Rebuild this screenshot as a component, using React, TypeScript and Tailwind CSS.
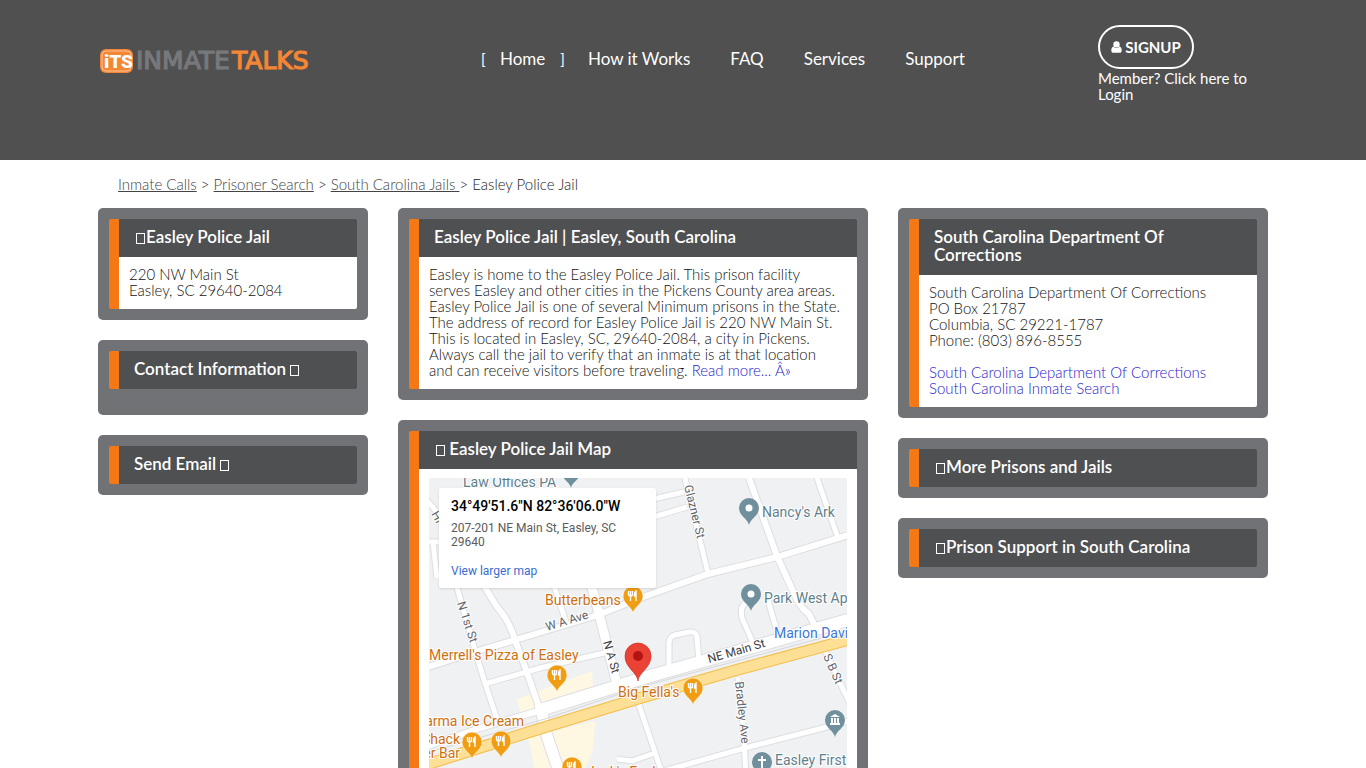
import React from 'react';

interface PanelProps {
  title: React.ReactNode;
  children?: React.ReactNode;
  className?: string;
}

// Empty glyph box shown beside some of the panel titles
const Glyph = ({ className = '' }: { className?: string }) => (
  <span
    aria-hidden="true"
    className={`inline-block h-[11px] w-[9px] border border-white align-[-1px] ${className}`}
  />
);

const Panel = ({ title, children, className = '' }: PanelProps) => (
  <section className={`rounded-[5px] bg-[#717275] p-[11px] ${className}`}>
    <div className="overflow-hidden rounded-[2px] border-l-10 border-[#f47816]">
      <h2 className="bg-[#4f5052] px-[15px] pt-[9px] pb-[11px] text-[17px] leading-[18px] font-semibold text-white">
        {title}
      </h2>
      {children && <div className="bg-white px-[10px] pt-[9px] pb-[11px]">{children}</div>}
    </div>
  </section>
);

const Logo = () => (
  <svg width="213" height="28" viewBox="0 0 213 28" role="img" aria-label="InmateTalks">
    <rect x="2" y="2" width="33" height="24" rx="6" fill="#f58634" />
    <rect x="4" y="4" width="29" height="20" rx="4" fill="none" stroke="#fff" opacity="0.5" />
    <text x="6" y="21" fontFamily="Roboto, sans-serif" fontWeight="900" fontSize="19" fill="#fff">
      iTS
    </text>
    <g fontFamily="'DejaVu Sans', sans-serif" fontWeight="400" fontSize="25" strokeWidth="1.2">
      <text x="38" y="22" fill="#77787b" stroke="#77787b">
        INMATE
      </text>
      <text x="134" y="22" fill="#f58634" stroke="#f58634">
        TALKS
      </text>
    </g>
  </svg>
);

const UserIcon = () => (
  <svg width="11" height="12" viewBox="0 0 11 12" fill="currentColor" aria-hidden="true">
    <circle cx="5.5" cy="3.4" r="3.2" />
    <path d="M2.6 5.4C1 5.6 0.3 7.2 0.3 9.4C0.3 11 1.2 11.8 2.4 11.8H8.600C9.800 11.8 10.7 11 10.7 9.4C10.7 7.2 10 5.6 8.4 5.4C7.600 6.4 6.600 7 5.500 7S3.400 6.400 2.600 5.400Z" />
  </svg>
);

const navLinks = ['How it Works', 'FAQ', 'Services', 'Support'];

const Header = () => (
  <header className="h-40 bg-[#505050] font-normal text-white">
    <div className="mx-auto grid max-w-[1170px] grid-cols-12 gap-[30px]">
      <a href="#" className="col-span-3 pt-[47px]">
        <Logo />
      </a>
      <nav className="col-span-7 flex gap-10 pt-[49px] pl-[83px] text-[17px] leading-5 whitespace-nowrap">
        <a href="#" className="-mr-[17px] flex">
          <span className="w-[19px] text-[15px]">[</span>
          Home
          <span className="pl-[15px] text-[15px]">]</span>
        </a>
        {navLinks.map((link) => (
          <a key={link} href="#">
            {link}
          </a>
        ))}
      </nav>
      <div className="col-span-2 pt-[25px] text-[15px] leading-4">
        <button className="flex h-11 w-24 items-center justify-center gap-[3px] rounded-full border-2 border-white font-bold">
          <UserIcon />
          SIGNUP
        </button>
        <a href="#" className="block pt-px">
          Member? Click here to Login
        </a>
      </div>
    </div>
  </header>
);

const roads = [
  { w: 5, d: 'M685 478L690 500L708 573' },
  { w: 6, d: 'M749 478L777 556L797 600Q803 610 809 614L815 626' },
  { w: 5, d: 'M817 478L838 538' },
  { w: 6, d: 'M855 533L777 557L708 574L643 597L598 615L515 640L475 652L425 668' },
  { w: 5, d: 'M640 502L684 492' },
  { w: 5, d: 'M640 521L687 507' },
  { w: 5, d: 'M425 542H450M433 542L437 578' },
  { w: 5, d: 'M425 498L450 528' },
  { w: 5, d: 'M452 570L475 650L485 683L498 722' },
  { w: 6, d: 'M478 576L497 607Q509 620 515 640L525 667L540 710' },
  { w: 5, d: 'M552 580L567 625' },
  { w: 9, d: 'M590 580L598 610L617 684' },
  { w: 5, d: 'M485 684L540 668L608 652' },
  { w: 5, d: 'M669 668V643Q669 637 675 635L689 632Q697 631 697 638L699 662' },
  { w: 5, d: 'M757 652L742 618Q739 606 748 601' },
  { w: 5, d: 'M768 600L776 628' },
  { w: 12, d: 'M540 710L650 676L707 660L855 618' },
  { w: 6, d: 'M425 747L480 728L545 709' },
  { w: 5, d: 'M638 702L663 776' },
  { w: 5, d: 'M738 678L742 710L746 775' },
  { w: 5, d: 'M660 772L745 748L827 727L855 719' },
  { w: 5, d: 'M823 646L850 704' },
  { w: 5, d: 'M617 759L632 761L655 753' },
  { w: 11, d: 'M540 704L546 733L560 775' },
];

const highway = 'M425 765L542 728L640 698L740 669L855 638';

const pinPath = 'M0 17C-1 11 -10 8 -10 0A10 10 0 0 1 10 0C10 8 1 11 0 17Z';

const foodPins = [
  [633, 596],
  [557, 675],
  [693, 688],
  [472, 742],
  [501, 741],
  [572, 767],
];

const placePins = [
  [749, 508],
  [751, 594],
  [571, 471],
];

const MapView = () => (
  <svg
    className="block h-[300px] w-full font-normal"
    viewBox="429 478 418 300"
    preserveAspectRatio="xMinYMin slice"
    role="img"
    aria-label="Easley Police Jail Map"
  >
    <rect x="429" y="478" width="418" height="300" fill="#f0f1f3" />
    <path d="M517 699L592 671L594 699L522 720ZM528 737L595 721L593 745Q592 757 585 768L535 770Z" fill="#fef8e3" />
    <g fill="none" stroke="#dcdee2">
      {roads.map((road) => (
        <path key={road.d} d={road.d} strokeWidth={road.w + 2} />
      ))}
    </g>
    <g fill="none" stroke="#fff">
      {roads.map((road) => (
        <path key={road.d} d={road.d} strokeWidth={road.w} />
      ))}
    </g>
    <path d="M425 753L545 719L640 687L855 629" fill="none" stroke="#d5d7db" />
    <path d={highway} fill="none" stroke="#f3bd48" strokeWidth="12" />
    <path d={highway} fill="none" stroke="#fde096" strokeWidth="10" />

    {/* Street names */}
    <g
      fontFamily="Roboto, sans-serif"
      fontSize="12"
      fill="#5f6368"
      stroke="#fff"
      strokeWidth="2"
      paintOrder="stroke"
    >
      <text transform="translate(684 486) rotate(76)">Glazner St</text>
      <text transform="translate(457 603) rotate(72)">N 1st St</text>
      <text transform="translate(547 631) rotate(-17)">W A Ave</text>
      <text transform="translate(603 642) rotate(74)" fill="#3c4043">N A St</text>
      <text transform="translate(709 663) rotate(-16)" fill="#3c4043">NE Main St</text>
      <text transform="translate(735 682) rotate(84)">Bradley Ave</text>
      <text transform="translate(823 656) rotate(66)">S B St</text>
      <text transform="translate(431 514) rotate(60)">Hi</text>
    </g>

    {foodPins.map(([x, y]) => (
      <g key={`${x}-${y}`} transform={`translate(${x} ${y})`}>
        <path d={pinPath} fill="#f09d14" stroke="#fff" strokeWidth="0.5" />
        <path
          d="M-4.5 -5V-2Q-4.5 0 -2.5 0Q-0.5 0 -0.5 -2V-5M-2.5 -5V5M3 5V-5Q1.5 -4 1.5 0H3"
          fill="none"
          stroke="#fff"
          strokeWidth="1.4"
        />
      </g>
    ))}
    {placePins.map(([x, y]) => (
      <g key={`${x}-${y}`} transform={`translate(${x} ${y})`}>
        <path d={pinPath} fill="#71909d" />
        <circle r="3.5" fill="#fff" />
      </g>
    ))}
    <g transform="translate(835 720)">
      <path d={pinPath} fill="#71909d" />
      <path d="M-5 -3L0 -6L5 -3ZM-4 -2H-2V3H-4ZM-1 -2H1V3H-1ZM2 -2H4V3H2ZM-5 3H5V5H-5Z" fill="#fff" />
    </g>
    <g transform="translate(762 762)">
      <path d={pinPath} fill="#71909d" />
      <path d="M0 -6V6M-4 -2H4" stroke="#fff" strokeWidth="2" />
    </g>
    <g transform="translate(638 656)">
      <path d="M0 25C-1 16 -13 12 -13 0A13 13 0 0 1 13 0C13 12 1 16 0 25Z" fill="#ea4335" stroke="#c5221f" strokeWidth="0.6" />
      <circle r="5" fill="#b31412" />
    </g>

    {/* Place names */}
    <g
      fontFamily="Roboto, sans-serif"
      fontSize="14"
      stroke="#fff"
      strokeWidth="2"
      paintOrder="stroke"
    >
      <g fill="#5f7f8c">
        <text x="463" y="487">Law Offices PA</text>
        <text x="762" y="517">Nancy's Ark</text>
        <text x="764" y="603">Park West Ap</text>
        <text x="775" y="765">Easley First</text>
      </g>
      <text x="774" y="638" fill="#3c78d8">Marion Davi</text>
      <g fill="#cd6f10">
        <text x="545" y="605">Butterbeans</text>
        <text x="429" y="660">Merrell's Pizza of Easley</text>
        <text x="618" y="697">Big Fella's</text>
        <text x="524" y="726" textAnchor="end">arma Ice Cream</text>
        <text x="460" y="744" textAnchor="end">Shack</text>
        <text x="460" y="758" textAnchor="end">er Bar</text>
        <text x="587" y="777">Jack's Easley</text>
      </g>
    </g>
  </svg>
);

const linkStyle = 'text-[#2a22cc]';

export default function App() {
  return (
    <div className="h-screen overflow-hidden bg-white font-[Lato,sans-serif] text-[15px] leading-4 font-light text-[#111]">
      <Header />
      <main className="mx-auto max-w-[1170px]">
        <nav aria-label="Breadcrumb" className="px-5 py-4 text-[#222]">
          <a href="#" className="text-[#444] underline">Inmate Calls</a> &gt;{' '}
          <a href="#" className="text-[#444] underline">Prisoner Search</a> &gt;{' '}
          <a href="#" className="text-[#444] underline">South Carolina Jails </a>
          &gt; Easley Police Jail
        </nav>

        <div className="grid grid-cols-12 items-start gap-[30px]">
          <div className="col-span-3 flex flex-col gap-5">
            <Panel title={<><Glyph className="ml-[2px] mr-[1px]" />Easley Police Jail</>}>
              220 NW Main St
              <br />
              Easley, SC 29640-2084
            </Panel>
            <Panel className="pb-[26px]" title={<>Contact Information <Glyph /></>} />
            <Panel title={<>Send Email <Glyph /></>} />
          </div>

          <div className="col-span-5 flex flex-col gap-5">
            <Panel title="Easley Police Jail | Easley, South Carolina">
              <p>
                Easley is home to the Easley Police Jail. This prison facility
                <br />
                serves Easley and other cities in the Pickens County area areas.
                <br />
                Easley Police Jail is one of several Minimum prisons in the State.
                <br />
                The address of record for Easley Police Jail is 220 NW Main St.
                <br />
                This is located in Easley, SC, 29640-2084, a city in Pickens.
                <br />
                Always call the jail to verify that an inmate is at that location
                <br />
                and can receive visitors before traveling.{' '}
                <a href="#" className={linkStyle}>Read more... Â»</a>
              </p>
            </Panel>
            <Panel title={<><Glyph className="ml-[2px]" /> Easley Police Jail Map</>}>
              <div className="relative">
                <MapView />
                <div className="absolute top-[10px] left-[10px] h-[100px] w-[217px] rounded-[2px] bg-white px-3 py-[10px] font-[Roboto,sans-serif] text-[12px] leading-[14px] font-normal text-[#5b5b5b] shadow">
                  <p className="pb-[7px] text-[14px] leading-4 font-medium text-black">
                    34°49'51.6"N 82°36'06.0"W
                  </p>
                  <p className="pb-[15px]">207-201 NE Main St, Easley, SC 29640</p>
                  <a href="#" className="text-[#3a6cd0]">View larger map</a>
                </div>
              </div>
            </Panel>
          </div>

          <div className="col-span-4 flex flex-col gap-5">
            <Panel title="South Carolina Department Of Corrections">
              South Carolina Department Of Corrections
              <br />
              PO Box 21787
              <br />
              Columbia, SC 29221-1787
              <br />
              Phone: (803) 896-8555
              <a href="#" className={`mt-4 block ${linkStyle}`}>
                South Carolina Department Of Corrections
              </a>
              <a href="#" className={`block ${linkStyle}`}>South Carolina Inmate Search</a>
            </Panel>
            <Panel title={<><Glyph className="ml-[2px] mr-[1px]" />More Prisons and Jails</>} />
            <Panel title={<><Glyph className="ml-[2px] mr-[1px]" />Prison Support in South Carolina</>} />
          </div>
        </div>
      </main>
    </div>
  );
}
